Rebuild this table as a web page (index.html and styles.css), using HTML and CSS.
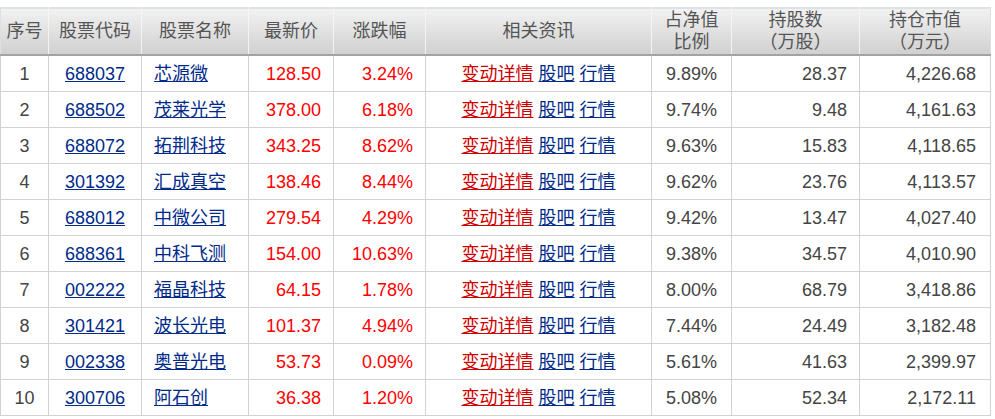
FILE: index.html
```html
<!DOCTYPE html>
<html lang="zh">
<head>
<meta charset="utf-8">
<link rel="stylesheet" href="styles.css">
</head>
<body>
<table class="hold">
  <colgroup>
    <col class="c1"><col class="c2"><col class="c3"><col class="c4"><col class="c5"><col class="c6"><col class="c7"><col class="c8"><col class="c9">
  </colgroup>
  <thead>
    <tr>
      <th>序号</th><th>股票代码</th><th>股票名称</th><th>最新价</th><th>涨跌幅</th><th>相关资讯</th><th>占净值<br>比例</th><th>持股数<br>（万股）</th><th>持仓市值<br>（万元）</th>
    </tr>
  </thead>
  <tbody>
    <tr><td class="ctr">1</td><td class="ctr"><a class="lk">688037</a></td><td class="nm"><a class="lk">芯源微</a></td><td class="rt red">128.50</td><td class="rt red">3.24%</td><td class="ctr"><a class="lr">变动详情</a> <a class="lk">股吧</a> <a class="lk">行情</a></td><td class="ctr">9.89%</td><td class="rt">28.37</td><td class="rt r2">4,226.68</td></tr>
    <tr><td class="ctr">2</td><td class="ctr"><a class="lk">688502</a></td><td class="nm"><a class="lk">茂莱光学</a></td><td class="rt red">378.00</td><td class="rt red">6.18%</td><td class="ctr"><a class="lr">变动详情</a> <a class="lk">股吧</a> <a class="lk">行情</a></td><td class="ctr">9.74%</td><td class="rt">9.48</td><td class="rt r2">4,161.63</td></tr>
    <tr><td class="ctr">3</td><td class="ctr"><a class="lk">688072</a></td><td class="nm"><a class="lk">拓荆科技</a></td><td class="rt red">343.25</td><td class="rt red">8.62%</td><td class="ctr"><a class="lr">变动详情</a> <a class="lk">股吧</a> <a class="lk">行情</a></td><td class="ctr">9.63%</td><td class="rt">15.83</td><td class="rt r2">4,118.65</td></tr>
    <tr><td class="ctr">4</td><td class="ctr"><a class="lk">301392</a></td><td class="nm"><a class="lk">汇成真空</a></td><td class="rt red">138.46</td><td class="rt red">8.44%</td><td class="ctr"><a class="lr">变动详情</a> <a class="lk">股吧</a> <a class="lk">行情</a></td><td class="ctr">9.62%</td><td class="rt">23.76</td><td class="rt r2">4,113.57</td></tr>
    <tr><td class="ctr">5</td><td class="ctr"><a class="lk">688012</a></td><td class="nm"><a class="lk">中微公司</a></td><td class="rt red">279.54</td><td class="rt red">4.29%</td><td class="ctr"><a class="lr">变动详情</a> <a class="lk">股吧</a> <a class="lk">行情</a></td><td class="ctr">9.42%</td><td class="rt">13.47</td><td class="rt r2">4,027.40</td></tr>
    <tr><td class="ctr">6</td><td class="ctr"><a class="lk">688361</a></td><td class="nm"><a class="lk">中科飞测</a></td><td class="rt red">154.00</td><td class="rt red">10.63%</td><td class="ctr"><a class="lr">变动详情</a> <a class="lk">股吧</a> <a class="lk">行情</a></td><td class="ctr">9.38%</td><td class="rt">34.57</td><td class="rt r2">4,010.90</td></tr>
    <tr><td class="ctr">7</td><td class="ctr"><a class="lk">002222</a></td><td class="nm"><a class="lk">福晶科技</a></td><td class="rt red">64.15</td><td class="rt red">1.78%</td><td class="ctr"><a class="lr">变动详情</a> <a class="lk">股吧</a> <a class="lk">行情</a></td><td class="ctr">8.00%</td><td class="rt">68.79</td><td class="rt r2">3,418.86</td></tr>
    <tr><td class="ctr">8</td><td class="ctr"><a class="lk">301421</a></td><td class="nm"><a class="lk">波长光电</a></td><td class="rt red">101.37</td><td class="rt red">4.94%</td><td class="ctr"><a class="lr">变动详情</a> <a class="lk">股吧</a> <a class="lk">行情</a></td><td class="ctr">7.44%</td><td class="rt">24.49</td><td class="rt r2">3,182.48</td></tr>
    <tr><td class="ctr">9</td><td class="ctr"><a class="lk">002338</a></td><td class="nm"><a class="lk">奥普光电</a></td><td class="rt red">53.73</td><td class="rt red">0.09%</td><td class="ctr"><a class="lr">变动详情</a> <a class="lk">股吧</a> <a class="lk">行情</a></td><td class="ctr">5.61%</td><td class="rt">41.63</td><td class="rt r2">2,399.97</td></tr>
    <tr><td class="ctr">10</td><td class="ctr"><a class="lk">300706</a></td><td class="nm"><a class="lk">阿石创</a></td><td class="rt red">36.38</td><td class="rt red">1.20%</td><td class="ctr"><a class="lr">变动详情</a> <a class="lk">股吧</a> <a class="lk">行情</a></td><td class="ctr">5.08%</td><td class="rt">52.34</td><td class="rt r2">2,172.11</td></tr>
  </tbody>
</table>
</body>
</html>
```

FILE: styles.css
```css
html, body {
  margin: 0;
  padding: 0;
  background: #fff;
}
body {
  padding-top: 7px;
  font-family: "Liberation Sans", Arial, "Noto Sans CJK SC", sans-serif;
  font-size: 18px;
  color: #444;
}
.hold {
  border-collapse: collapse;
  table-layout: fixed;
  width: 990px;
}
.c1 { width: 48px; }
.c2 { width: 93px; }
.c3 { width: 107px; }
.c4 { width: 85px; }
.c5 { width: 92px; }
.c6 { width: 226px; }
.c7 { width: 80px; }
.c8 { width: 128px; }
.c9 { width: 131px; }

.hold th {
  height: 46px;
  padding: 0;
  font-weight: normal;
  color: #555;
  line-height: 22px;
  font-size: 18px;
  text-align: center;
  background: linear-gradient(#f2f2f2, #d0d0d0);
  border-top: 1px solid #dde3ea;
  border-left: 1px solid #f4f4f4;
  border-right: 1px solid #f4f4f4;
  border-bottom: 2px solid #a3a3a3;
}
.hold th:first-child { border-left: 1px solid #e0e0e0; }
.hold th:last-child { border-right: 1px solid #e0e0e0; }

.hold td {
  height: 35px;
  padding: 0;
  border: 1px solid #d2d2d2;
  white-space: nowrap;
  line-height: 22px;
}
.ctr { text-align: center; }
.rt { text-align: right; padding-right: 12px !important; }
.r2 { padding-right: 14px !important; }
.nm { padding-left: 12px !important; text-align: left; }
.red { color: #f00; }
.lk { color: #002a8a; text-decoration: underline; }
.lr { color: #cc0000; text-decoration: underline; }
```
